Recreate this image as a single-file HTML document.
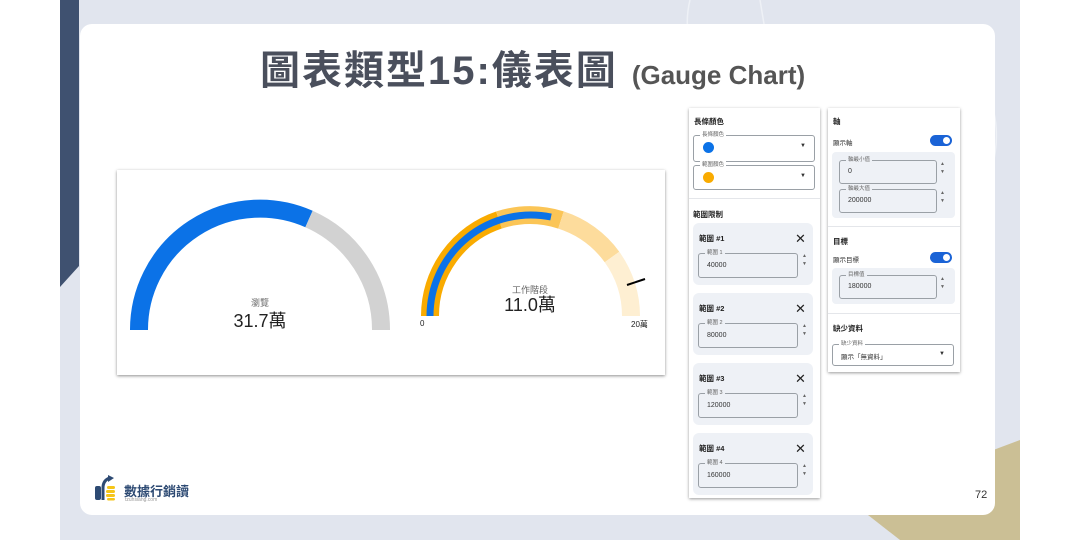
<!DOCTYPE html>
<html><head><meta charset="utf-8"><style>
*{margin:0;padding:0;box-sizing:border-box}
body{width:1080px;height:540px;position:relative;overflow:hidden;background:#fff;font-family:"Liberation Sans","Noto Sans CJK TC",sans-serif}
.a{position:absolute}
.t{font-size:7px;color:#333}
.inp{position:absolute;border:1px solid #9aa0a6;border-radius:3px;background:transparent}
.inp .l{position:absolute;top:-5px;left:6px;background:inherit;font-size:5.5px;color:#666;padding:0 2px;line-height:8px}
.inp .v{position:absolute;left:8px;font-size:7px;color:#333}
.card{position:absolute;background:#eef1f6;border-radius:6px}
.x{position:absolute;font-size:13px;color:#222;line-height:13px}
.sp{position:absolute;font-size:5px;color:#666;line-height:8px}
.tog{position:absolute;width:22px;height:11px;border-radius:6px;background:#1a63d6}
.tog:after{content:"";position:absolute;right:2px;top:2px;width:7px;height:7px;border-radius:50%;background:#fff}
.hd{position:absolute;font-size:7.5px;font-weight:bold;color:#222}
</style></head><body>
<div class="a" style="left:60px;top:0;width:960px;height:540px;background:#e1e5ee"></div>
<svg class="a" style="left:0;top:0" width="1080" height="540">
<polygon points="60,0 79,0 79,266 60,287" fill="#3f5170"/>
<polygon points="1020,440 940,470 868,515 900,540 1020,540" fill="#cbbf95"/>
<path d="M690 0 C 680 40 700 80 720 100 M760 0 L 780 120 M960 60 C1010 100 1000 160 980 200" stroke="#eef1f6" stroke-width="1.5" fill="none"/>
</svg>
<div class="a" style="left:80px;top:24px;width:915px;height:491px;background:#fff;border-radius:12px"></div>
<div class="a" style="left:260px;top:38px;white-space:nowrap;color:#4a4f5c;font-weight:bold">
<span style="font-size:40px;letter-spacing:2px">圖表類型15:儀表圖</span><span style="font-size:26px;color:#555;margin-left:14px">(Gauge Chart)</span></div>

<div class="a" style="left:117px;top:170px;width:548px;height:205px;background:#fff;box-shadow:0 1px 3px rgba(0,0,0,.45)"></div>
<svg class="a" style="left:0;top:0" width="1080" height="540">
<path d="M139 330 A121 121 0 0 1 309 219" stroke="#0b72e7" stroke-width="18" fill="none"/>
<path d="M309 219 A121 121 0 0 1 381 330" stroke="#d2d2d2" stroke-width="18" fill="none"/>
<path d="M430 316 A101 101 0 0 1 499 220" stroke="#f9ab00" stroke-width="18" fill="none"/>
<path d="M499 220 A101 101 0 0 1 561 220" stroke="#fbc556" stroke-width="18" fill="none"/>
<path d="M561 220 A101 101 0 0 1 612 257" stroke="#fddc9c" stroke-width="18" fill="none"/>
<path d="M612 257 A101 101 0 0 1 631 316" stroke="#feefd2" stroke-width="18" fill="none"/>
<path d="M430 316 A101 101 0 0 1 551 217" stroke="#0b72e7" stroke-width="7" fill="none"/>
<line x1="627" y1="285" x2="645" y2="279" stroke="#000" stroke-width="2"/>
</svg>
<div class="a" style="left:200px;top:296px;width:120px;text-align:center;font-size:9px;color:#666">瀏覽</div>
<div class="a" style="left:200px;top:307px;width:120px;text-align:center;font-size:18px;color:#222">31.7萬</div>
<div class="a" style="left:470px;top:283px;width:120px;text-align:center;font-size:9px;color:#666">工作階段</div>
<div class="a" style="left:470px;top:291px;width:120px;text-align:center;font-size:18px;color:#222">11.0萬</div>
<div class="a" style="left:420px;top:319px;font-size:8px;color:#222">0</div>
<div class="a" style="left:631px;top:319px;font-size:8px;color:#222">20萬</div>

<div class="a" style="left:689px;top:108px;width:131px;height:390px;background:#fff;box-shadow:0 1px 3px rgba(0,0,0,.4)"></div>
<div class="hd" style="left:694px;top:116px">長條顏色</div>
<div class="inp" style="left:693px;top:135px;width:122px;height:27px;background:#fff"><span class="l">長條顏色</span><div style="position:absolute;left:9px;top:6px;width:11px;height:11px;border-radius:50%;background:#0b72e7"></div><span class="v" style="left:106px;top:7px;font-size:6px">▼</span></div>
<div class="inp" style="left:693px;top:165px;width:122px;height:25px;background:#fff"><span class="l">範圍顏色</span><div style="position:absolute;left:9px;top:6px;width:11px;height:11px;border-radius:50%;background:#f9ab00"></div><span class="v" style="left:106px;top:7px;font-size:6px">▼</span></div>
<div class="a" style="left:689px;top:198px;width:131px;height:1px;background:#e4e6ea"></div>
<div class="hd" style="left:693px;top:209px">範圍限制</div>

<div class="card" style="left:693px;top:223px;width:120px;height:62px"></div>
<div class="hd" style="left:699px;top:233px">範圍 #1</div><div class="x" style="left:795px;top:232px">✕</div>
<div class="inp" style="left:698px;top:253px;width:100px;height:25px;background:#eef1f6"><span class="l">範圍 1</span><span class="v" style="top:8px">40000</span></div>
<div class="sp" style="left:802px;top:252px">▲<br>▼</div>

<div class="card" style="left:693px;top:293px;width:120px;height:62px"></div>
<div class="hd" style="left:699px;top:303px">範圍 #2</div><div class="x" style="left:795px;top:302px">✕</div>
<div class="inp" style="left:698px;top:323px;width:100px;height:25px;background:#eef1f6"><span class="l">範圍 2</span><span class="v" style="top:8px">80000</span></div>
<div class="sp" style="left:802px;top:322px">▲<br>▼</div>

<div class="card" style="left:693px;top:363px;width:120px;height:62px"></div>
<div class="hd" style="left:699px;top:373px">範圍 #3</div><div class="x" style="left:795px;top:372px">✕</div>
<div class="inp" style="left:698px;top:393px;width:100px;height:25px;background:#eef1f6"><span class="l">範圍 3</span><span class="v" style="top:8px">120000</span></div>
<div class="sp" style="left:802px;top:392px">▲<br>▼</div>

<div class="card" style="left:693px;top:433px;width:120px;height:62px"></div>
<div class="hd" style="left:699px;top:443px">範圍 #4</div><div class="x" style="left:795px;top:442px">✕</div>
<div class="inp" style="left:698px;top:463px;width:100px;height:25px;background:#eef1f6"><span class="l">範圍 4</span><span class="v" style="top:8px">160000</span></div>
<div class="sp" style="left:802px;top:462px">▲<br>▼</div>

<div class="a" style="left:828px;top:108px;width:132px;height:264px;background:#fff;box-shadow:0 1px 3px rgba(0,0,0,.4)"></div>
<div class="hd" style="left:833px;top:116px">軸</div>
<div class="t" style="left:833px;top:137px;position:absolute;font-size:6.5px">顯示軸</div>
<div class="tog" style="left:930px;top:135px"></div>
<div class="card" style="left:832px;top:152px;width:123px;height:66px;border-radius:4px"></div>
<div class="inp" style="left:839px;top:160px;width:98px;height:24px;background:#eef1f6"><span class="l">軸最小值</span><span class="v" style="top:7px">0</span></div>
<div class="sp" style="left:940px;top:160px">▲<br>▼</div>
<div class="inp" style="left:839px;top:189px;width:98px;height:24px;background:#eef1f6"><span class="l">軸最大值</span><span class="v" style="top:7px">200000</span></div>
<div class="sp" style="left:940px;top:189px">▲<br>▼</div>
<div class="a" style="left:828px;top:226px;width:132px;height:1px;background:#e4e6ea"></div>
<div class="hd" style="left:833px;top:236px">目標</div>
<div class="t" style="left:833px;top:254px;position:absolute;font-size:6.5px">顯示目標</div>
<div class="tog" style="left:930px;top:252px"></div>
<div class="card" style="left:832px;top:268px;width:123px;height:36px;border-radius:4px"></div>
<div class="inp" style="left:839px;top:275px;width:98px;height:24px;background:#eef1f6"><span class="l">目標值</span><span class="v" style="top:7px">180000</span></div>
<div class="sp" style="left:940px;top:275px">▲<br>▼</div>
<div class="a" style="left:828px;top:313px;width:132px;height:1px;background:#e4e6ea"></div>
<div class="hd" style="left:833px;top:323px">缺少資料</div>
<div class="inp" style="left:832px;top:344px;width:122px;height:22px;background:#fff"><span class="l">缺少資料</span><span class="v" style="top:6px;font-size:6.5px">顯示「無資料」</span><span class="v" style="left:106px;top:6px;font-size:6px">▼</span></div>

<svg class="a" style="left:94px;top:474px" width="30" height="28">
<rect x="1" y="12" width="6" height="14" rx="2" fill="#2d4a73"/>
<path d="M9 26 L9 14 Q9 6 16 4" stroke="#2d4a73" stroke-width="3" fill="none"/>
<polygon points="14,1 20,4 14,8" fill="#2d4a73"/>
<rect x="13" y="12" width="8" height="3" rx="1.5" fill="#f5c518"/>
<rect x="12" y="16" width="9" height="3" rx="1.5" fill="#f5c518"/>
<rect x="12" y="20" width="9" height="3" rx="1.5" fill="#f5c518"/>
<rect x="13" y="24" width="8" height="2.5" rx="1.2" fill="#f5c518"/>
</svg>
<div class="a" style="left:124px;top:481px;font-size:13px;font-weight:bold;color:#2d4a73">數據行銷讀</div>
<div class="a" style="left:125px;top:497px;font-size:5px;color:#999">tzuhsiang.com</div>
<div class="a" style="left:975px;top:489px;font-size:11px;color:#333">72</div>
</body></html>
